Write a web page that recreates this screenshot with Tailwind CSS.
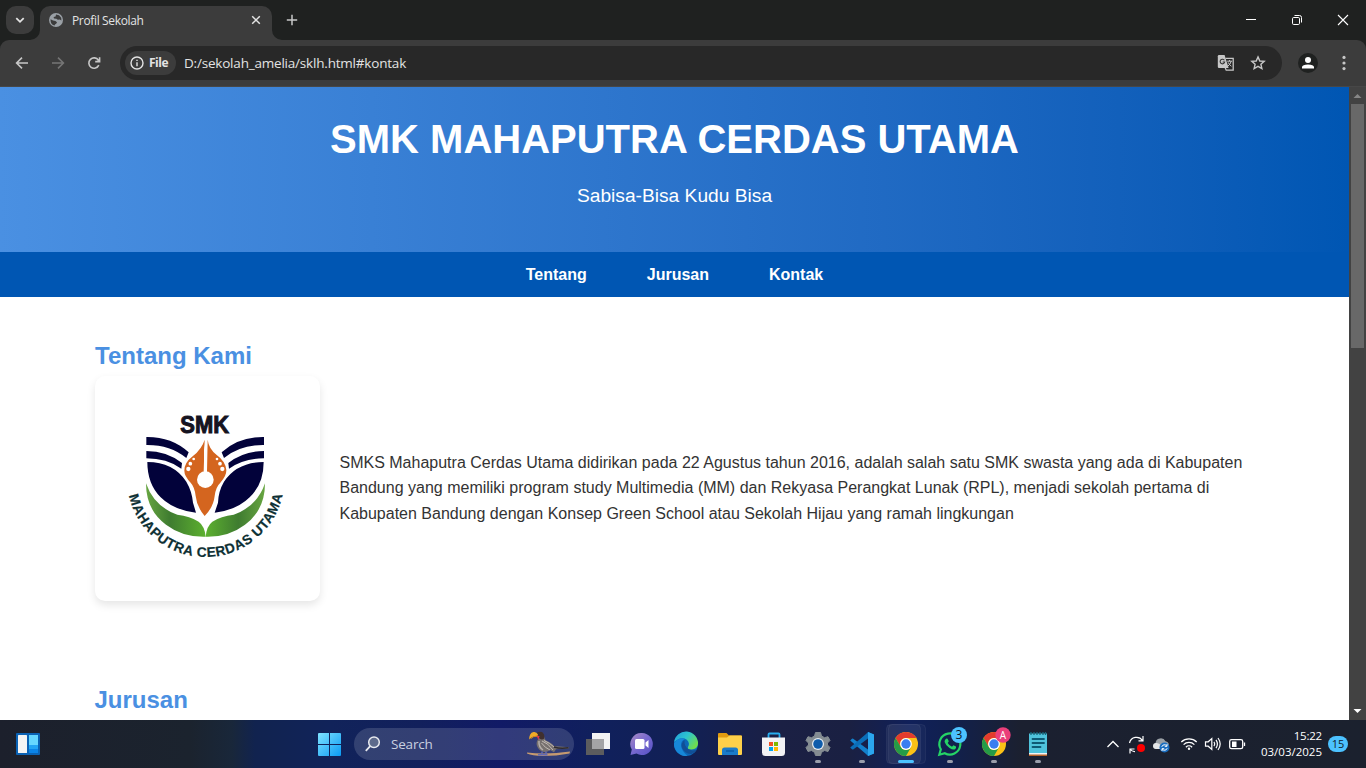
<!DOCTYPE html>
<html lang="id">
<head>
<meta charset="utf-8">
<title>Profil Sekolah</title>
<script src="https://cdn.jsdelivr.net/npm/@tailwindcss/browser@4"></script>
</head>
<body class="w-[1366px] h-[768px] overflow-hidden flex flex-col bg-white">

<!-- Tab strip -->
<div class="h-10 shrink-0 bg-[#1f2120] flex items-start font-['Open_Sans',sans-serif]">
  <div class="ml-1.5 mt-1.5 size-7 rounded-[10px] bg-[#3c3c3c] flex items-center justify-center">
    <svg class="size-3" viewBox="0 0 12 12" fill="none" stroke="#e3e3e3" stroke-width="1.8"><path d="M2.3 4.2 6 7.8 9.7 4.2"/></svg>
  </div>
  <div class="relative ml-1.5 mt-1.5 w-[232px] h-[34px] rounded-t-[10px] bg-[#3c3c3c] flex items-center pb-1.5 pl-[9px] pr-[11px]">
    <svg class="absolute -left-2.5 bottom-0 size-2.5" viewBox="0 0 10 10"><path d="M10 0V10H0A10 10 0 0 0 10 0Z" fill="#3c3c3c"/></svg>
    <svg class="absolute -right-2.5 bottom-0 size-2.5" viewBox="0 0 10 10"><path d="M0 0V10H10A10 10 0 0 1 0 0Z" fill="#3c3c3c"/></svg>
    <svg class="size-3.5" viewBox="0 0 14 14"><circle cx="7" cy="7" r="7" fill="#9aa0a6"/><path d="M1.6 6.2 4 7.6 6.4 8 8 9.2 7.4 10.6 6 11.4 5.6 12.6A5.8 5.8 0 0 1 1.6 6.2ZM7 1.5 10 2.2 12.2 4.8 12.4 7.4 10.8 6.6 8.8 6.8 7.4 5.8 5 5.4 4.6 4 6.6 3.4Z" fill="#3c3c3c"/></svg>
    <span class="ml-[9px] pt-0.5 text-[12px] tracking-[-0.35px] text-[#e3e3e3] leading-4 grow">Profil Sekolah</span>
    <svg class="size-2.5" viewBox="0 0 10 10" stroke="#e3e3e3" stroke-width="1.5"><path d="M1.2 1.2 8.8 8.8M8.8 1.2 1.2 8.8"/></svg>
  </div>
  <svg class="ml-[14px] mt-[14px] size-3" viewBox="0 0 12 12" stroke="#c7c7c7" stroke-width="1.5"><path d="M6 .8V11.2M.8 6H11.2"/></svg>
  <div class="ml-auto h-10 flex items-center">
    <svg class="w-[46px] h-10" viewBox="0 0 46 40"><path d="M18 19.5H28" stroke="#fff"/></svg>
    <svg class="w-[46px] h-10" viewBox="0 0 46 40" fill="none" stroke="#fff"><rect x="18.5" y="17.5" width="7" height="7" rx="1.2"/><path d="M20.5 15.5H25.5A2 2 0 0 1 27.5 17.5V22.5"/></svg>
    <svg class="w-[46px] h-10" viewBox="0 0 46 40"><path d="M18 15 28 25M28 15 18 25" stroke="#fff" stroke-width="1.1"/></svg>
  </div>
</div>

<!-- Toolbar -->
<div class="h-[47px] shrink-0 bg-[#1f2120]">
 <div class="h-full bg-[#3c3c3c] rounded-t-[9px] border-b border-[#474747] flex items-center font-['Open_Sans',sans-serif]">
  <svg class="ml-[15px] size-[14px]" viewBox="0 0 14 14" fill="none" stroke="#c7c7c7" stroke-width="1.6"><path d="M13 7H2M7 1.6 1.6 7 7 12.4"/></svg>
  <svg class="ml-[22px] size-[14px]" viewBox="0 0 14 14" fill="none" stroke="#757575" stroke-width="1.6"><path d="M1 7H12M7 1.6 12.4 7 7 12.4"/></svg>
  <svg class="ml-[22px] size-[14px]" viewBox="0 0 14 14" fill="none" stroke="#c7c7c7" stroke-width="1.6"><path d="M11.8 9.2A5.2 5.2 0 1 1 11.4 4.2L12.4 5.4M12.6 1.2V5.6H8.2"/></svg>
  <div class="ml-[19px] w-[1162px] h-[34px] rounded-full bg-[#282828] flex items-center pl-[5px]">
    <div class="w-[51px] h-6 rounded-full bg-[#3c3c3c] flex items-center pl-[5px]">
      <svg class="size-[14px]" viewBox="0 0 14 14" fill="none" stroke="#e3e3e3" stroke-width="1.4"><circle cx="7" cy="7" r="6"/><path d="M7 6.2V10.2M7 3.7V5.1"/></svg>
      <span class="ml-[5px] text-[12px] font-bold tracking-[-0.5px] text-[#e3e3e3] leading-4">File</span>
    </div>
    <span class="ml-2 text-[13.5px] tracking-[-0.2px] text-[#e3e3e3] leading-5 grow">D:/sekolah_amelia/sklh.html#kontak</span>
    <svg class="size-[18px]" viewBox="0 0 18 18"><path d="M2 1H7.6L11.6 14H2A1.2 1.2 0 0 1 .8 12.8V2.2A1.2 1.2 0 0 1 2 1Z" fill="#c7c7c7"/><path d="M8.6 4.4H16.2V16.2H9.2L8.2 13.8" fill="none" stroke="#c7c7c7" stroke-width="1.3"/><path d="M7.4 6.3A2.3 2.3 0 1 0 7.7 8H5.6" fill="none" stroke="#333" stroke-width="1.1"/><path d="M10.2 7.2H15M12.6 6V7.2M14.2 7.2Q13.4 10.4 10.8 12.2M11.2 8.4Q12.2 10.8 14.4 12.2" fill="none" stroke="#c7c7c7"/></svg>
    <svg class="ml-[15px] mr-4 size-4" viewBox="0 0 16 16" fill="none" stroke="#c7c7c7" stroke-width="1.4"><path d="M8 1.9 9.8 6 14.2 6.4 10.9 9.3 11.9 13.6 8 11.3 4.1 13.6 5.1 9.3 1.8 6.4 6.2 6Z"/></svg>
  </div>
  <svg class="ml-4 size-5" viewBox="0 0 20 20"><circle cx="10" cy="10" r="10" fill="#1f2120"/><circle cx="10" cy="7" r="3" fill="#fff"/><path d="M4 15.6V14Q4.4 11.4 10 11.4T16 14V15.6Z" fill="#fff"/></svg>
  <svg class="ml-6 w-1 h-4" viewBox="0 0 4 16" fill="#c7c7c7"><circle cx="2" cy="2.4" r="1.6"/><circle cx="2" cy="8" r="1.6"/><circle cx="2" cy="13.6" r="1.6"/></svg>
 </div>
</div>

<!-- Page viewport -->
<div class="h-[633px] shrink-0 flex">
  <div class="w-[1349px] h-full overflow-hidden bg-white font-['Liberation_Sans',Arial,sans-serif] text-[#333]">
    <header class="h-[165px] bg-linear-to-r from-[#4a90e2] to-[#0056b3] text-white text-center pt-[20px]">
      <h1 class="text-[40px] leading-[64px] font-bold">SMK MAHAPUTRA CERDAS UTAMA</h1>
      <p class="mt-[9px] text-[19.2px] leading-[31px]">Sabisa-Bisa Kudu Bisa</p>
    </header>
    <nav class="h-[45px] bg-[#0056b3] text-white font-bold text-base flex justify-center items-center gap-[60px]">
      <a>Tentang</a><a>Jurusan</a><a>Kontak</a>
    </nav>
    <main class="pl-[94.5px]">
      <section class="pt-[40px] h-[344px]">
        <h2 class="text-[24px] leading-[38px] font-bold text-[#4a90e2] pl-[0.5px]">Tentang Kami</h2>
        <div class="mt-[1px] flex items-center gap-5">
          <div class="size-[225px] rounded-[10px] bg-white shadow-[0_4px_8px_rgba(0,0,0,0.1)]">
            <svg class="size-[225px]" viewBox="15 18 675 675">
              <defs>
                <linearGradient id="leafL"><stop offset="0" stop-color="#67a541"/><stop offset=".4" stop-color="#3f7c30"/><stop offset="1" stop-color="#5cb02f"/></linearGradient>
                <linearGradient id="leafR"><stop offset="0" stop-color="#5cb02f"/><stop offset=".55" stop-color="#3f7c30"/><stop offset="1" stop-color="#67a541"/></linearGradient>
                <path id="arc" d="M111 325A236 236 0 0 0 583 325"/>
              </defs>
              <text x="271" y="189" textLength="146" lengthAdjust="spacingAndGlyphs" font-family="Liberation Sans" font-weight="700" font-size="69" fill="#15131f" stroke="#15131f" stroke-width="3">SMK</text>
              <g fill="#02023a">
                <path d="M169 201Q245 200 296 247L289 264Q240 224 169 225Z"/>
                <path d="M169 243Q230 243 276 279L274 296Q230 265 169 265Z"/>
                <path d="M172 276Q250 276 289 335Q306 364 309 398L318 428Q250 420 212 382Q172 342 172 276Z"/>
                <path d="M522 201Q446 200 395 247L402 264Q451 224 522 225Z"/>
                <path d="M522 243Q461 243 415 279L417 296Q461 265 522 265Z"/>
                <path d="M521 276Q441 276 402 335Q385 364 384 398L374 428Q441 420 479 382Q521 342 521 276Z"/>
              </g>
              <path d="M168 340Q192 410 262 434Q300 438 326 455Q344 468 347 500Q278 502 228 464Q168 420 168 340Z" fill="url(#leafL)"/>
              <path d="M525 340Q501 410 431 434Q393 438 367 455Q350 468 347 500Q415 502 465 464Q525 420 525 340Z" fill="url(#leafR)"/>
              <path d="M344 209Q336 236 308 259Q283 278 283 302Q283 318 302 338Q314 351 317 378Q320 410 344 438Q370 412 374 378Q377 351 391 338Q410 318 409 300Q406 274 381 256Q356 236 353 209L351 305H341Z" fill="#d4651f"/>
              <path d="M342 240V320H351V240L348 205Z" fill="#fff"/>
              <circle cx="346" cy="329" r="25" fill="#fff"/>
              <g fill="#fff"><circle cx="311" cy="267" r="4"/><circle cx="301" cy="281" r="5.500"/><circle cx="295" cy="297" r="6.500"/><circle cx="381" cy="267" r="4"/><circle cx="390" cy="281" r="5.500"/><circle cx="397" cy="297" r="6.500"/></g>
              <text font-family="Liberation Sans" font-weight="700" font-size="41" fill="#0e3034" stroke="#0e3034" stroke-width=".6"><textPath href="#arc" startOffset="52" textLength="639">MAHAPUTRA CERDAS UTAMA</textPath></text>
            </svg>
          </div>
          <p class="w-[914px] text-base leading-[25.6px] -mt-[0.6px] text-[#333]">SMKS Mahaputra Cerdas Utama didirikan pada 22 Agustus tahun 2016, adalah salah satu SMK swasta yang ada di Kabupaten Bandung yang memiliki program study Multimedia (MM) dan Rekyasa Perangkat Lunak (RPL), menjadi sekolah pertama di Kabupaten Bandung dengan Konsep Green School atau Sekolah Hijau yang ramah lingkungan</p>
        </div>
      </section>
      <h2 class="mt-[40px] text-[24px] leading-[38px] font-bold text-[#4a90e2]">Jurusan</h2>
    </main>
  </div>
  <div class="w-[17px] h-full bg-[#424242] flex flex-col items-center">
    <svg class="w-[17px] h-[17px]" viewBox="0 0 17 17"><path d="M4.500 11 8.500 7 12.500 11Z" fill="#868686"/></svg>
    <div class="w-[13px] h-[244px] bg-[#686868]"></div>
    <svg class="mt-auto w-[17px] h-[17px]" viewBox="0 0 17 17"><path d="M4.500 6 8.500 10 12.500 6Z" fill="#fff"/></svg>
  </div>
</div>

<!-- Taskbar -->
<div class="h-12 shrink-0 flex items-center font-['Open_Sans',sans-serif] text-white bg-[linear-gradient(90deg,#1c202c_0px,#1b232e_190px,#19273a_232px,#11234f_255px,#11235a_330px,#12205c_420px,#111a66_500px,#10205c_600px,#122054_690px,#1b2044_780px,#1a2042_850px,#10205a_910px,#11204e_950px,#1b2030_1020px,#1b212e_1366px)]">
  <svg class="ml-4 w-6 h-[22px]" viewBox="0 0 24 22"><rect width="24" height="22" rx="1" fill="#0a62b4"/><rect x="2" y="2" width="9" height="18" rx=".6" fill="#f4f4f4"/><rect x="13" y="2" width="9" height="10" fill="#66d7ff"/><rect x="13" y="12" width="9" height="4" fill="#22a4f4"/><rect x="13" y="16" width="9" height="4" fill="#0a84e8"/></svg>
  <svg class="ml-[278px] size-[23px]" viewBox="0 0 23 23"><defs><linearGradient id="win" x1="0" y1="0" x2="23" y2="23" gradientUnits="userSpaceOnUse"><stop stop-color="#7fe3ff"/><stop offset="1" stop-color="#0a9bf5"/></linearGradient></defs><path d="M0 1Q0 0 1 0H11V11H0ZM12 0H22Q23 0 23 1V11H12ZM0 12H11V23H1Q0 23 0 22ZM12 12H23V22Q23 23 22 23H12Z" fill="url(#win)"/></svg>
  <div class="ml-[13px] w-[220px] h-8 rounded-full bg-white/14 flex items-center pl-[11px]">
    <svg class="size-4" viewBox="0 0 16 16" fill="none" stroke="#e8eaf0" stroke-width="1.5"><circle cx="9" cy="6.300" r="5.300" fill="#5d6a8c"/><path d="M5.200 10.200 .8 14.800" stroke-width="1.800"/></svg>
    <span class="ml-[10px] text-[13.500px] tracking-[-0.200px] leading-5 text-[#c9d0e0] grow">Search</span>
    <svg class="mr-[3px] w-[45px] h-7" viewBox="0 0 45 28"><path d="M1 22.500Q20 25 44 21.500L43.500 23.500Q30 26 17 26Q6 25.500 1 23.500Z" fill="#c59a70"/><path d="M12 7Q15 6 18 6Q18.500 9 20 10.500Q26 13 28 16L43 17.200 42.500 18.500 30 19.200 28 22.300 24 20Q21 22.800 17 21.800Q12 20 10.700 15Q10 11 13 8.500Z" fill="#77716f"/><path d="M13 11Q12.500 17 17 20" stroke="#b5afab" stroke-width="1.500" fill="none"/><path d="M16 11Q22 13 27 20M18 10.500Q24 13 28 17M15.500 13Q19 18 24 20" stroke="#d4cdc6" fill="none" stroke-width=".8"/><path d="M10 3.500Q12 1 16 2Q19 4 18.200 8.500Q16 10.500 13.500 8.500L11.500 5Z" fill="#40302e"/><path d="M3.300 9.500Q3 3 7.500 2Q10.500 1.500 12 4.500L11 6.500Q6.500 5.500 3.300 9.500Z" fill="#f0ab28"/><path d="M5 8.500Q7 6 11.500 6" stroke="#d88715" fill="none"/><path d="M10.500 5.800 13.500 6 12.500 10Z" fill="#e0364e"/><path d="M28 17Q34 19 42.500 17.800" fill="none" stroke="#2e2b31" stroke-width="1.600"/><path d="M16 21.500V24M20 21.500V24M12 24.700H21.500" stroke="#646bb2" stroke-width="1.500"/></svg>
  </div>
  <div class="ml-[2px] flex">
    <svg class="w-11 h-12" viewBox="0 0 44 48"><rect x="16" y="13" width="18" height="16" fill="#f3f3f3"/><rect x="10" y="19" width="18" height="16" fill="#5c5c5e"/><rect x="16" y="19" width="12" height="10" fill="#a4a4a6"/></svg>
    <svg class="w-11 h-12" viewBox="0 0 44 48"><defs><linearGradient id="chat" x1="0" y1="0" x2="1" y2="1"><stop stop-color="#a98bc4"/><stop offset=".5" stop-color="#7668cf"/><stop offset="1" stop-color="#5450c4"/></linearGradient></defs><path d="M22 13A11 11 0 1 1 16.500 33.600L10.500 35 11.800 29.500A11 11 0 0 1 22 13Z" fill="url(#chat)"/><rect x="15" y="19" width="9.500" height="10" rx="1.500" fill="#fff"/><path d="M25.500 22.500 28.500 20V28L25.500 25.500Z" fill="#fff"/></svg>
    <svg class="w-11 h-12" viewBox="0 0 44 48"><defs><linearGradient id="eg" x1="0" y1="0" x2="1" y2=".6"><stop stop-color="#229bdc"/><stop offset=".5" stop-color="#2cc4cf"/><stop offset="1" stop-color="#6fdc4e"/></linearGradient></defs><circle cx="22" cy="24" r="12" fill="#0c67b8"/><path d="M10.100 22A12 12 0 0 1 34 24Q33.500 29 27.500 29.500Q23 29.500 24 27Q26.500 23 22.500 19.500Q17 16 10.100 22Z" fill="url(#eg)"/><path d="M10 23Q15 16.500 21 19Q17 20.500 17 25Q17.500 31 23.500 35.900A12 12 0 0 1 10 23Z" fill="#1787d8"/><path d="M20.500 20Q16.500 23 18 28Q21 34 27.500 34Q31 33.200 33 29.500Q28 31.500 24 29Q20 26 20.500 20Z" fill="#114f96"/></svg>
    <svg class="w-11 h-12" viewBox="0 0 44 48"><path d="M10 14Q10 13 11 13H18.500L21 15.500H33Q34 15.500 34 16.500V20H10Z" fill="#e19b10"/><path d="M10 17.500H19L21.500 15.500H33Q34 15.500 34 16.500V34Q34 35 33 35H11Q10 35 10 34Z" fill="#fdd04a"/><path d="M14 35V30Q14 27.500 16.500 27.500H27.500Q30 27.500 30 30V35Z" fill="#1a7bc9"/><path d="M18 31H26" stroke="#0d5da6" stroke-width="1.500"/></svg>
    <svg class="w-11 h-12" viewBox="0 0 44 48"><path d="M16.500 18.500V14.500Q16.500 13.500 17.500 13.500H26.500Q27.500 13.500 27.500 14.500V18.500" fill="none" stroke="#28aef0" stroke-width="1.800"/><path d="M10 17.500H33V32.500Q33 36 29.500 36H13.500Q10 36 10 32.500Z" fill="#f2f2f4"/><rect x="17" y="22" width="4" height="4" fill="#f25022"/><rect x="22" y="22" width="4" height="4" fill="#7fba00"/><rect x="17" y="27" width="4" height="4" fill="#00a4ef"/><rect x="22" y="27" width="4" height="4" fill="#ffb900"/></svg>
    <svg class="w-11 h-12" viewBox="0 0 44 48"><path d="M19.500 12.500H24.500L25.500 16 28.500 17.700 32 16.700 34 20.500 31.500 23V25L34 27.500 32 31.500 28.500 30.500 25.500 32.300 24.500 35.500H19.500L18.500 32.300 15.500 30.500 12 31.500 10 27.500 12.500 25V23L10 20.500 12 16.700 15.500 17.700 18.500 16Z" fill="#848c92" stroke="#848c92" stroke-linejoin="round"/><circle cx="22" cy="24" r="6" fill="#e9eef2"/><circle cx="22" cy="24" r="4.800" fill="#0e5cab"/><rect x="19" y="40" width="6" height="3" rx="1.500" fill="#9a9eab"/></svg>
    <svg class="w-11 h-12" viewBox="0 0 44 48"><path d="M28 12 34 14.500V33.500L28 36 26 34 10.200 20.500 12 18.800Q12.800 18.200 13.600 18.900L28 29.500Z" fill="#1380cc"/><path d="M10.200 27.500 26 14 28 12V18.500L13.500 29.300Q12.800 29.900 12 29.200Z" fill="#0b6eb8"/><path d="M28 12 34 14.500V33.500L28 36Z" fill="#2ba6ee"/><rect x="19" y="40" width="6" height="3" rx="1.500" fill="#9a9eab"/></svg>
    <svg class="w-11 h-12" viewBox="0 0 44 48"><rect x="4.500" y="4.500" width="37" height="39" rx="4" fill="#fff" fill-opacity=".03" stroke="#fff" stroke-opacity=".06"/><rect x="2.500" y="4.500" width="34" height="39" rx="4" fill="#fff" fill-opacity=".06" stroke="#fff" stroke-opacity=".06"/>
      <g id="chrome"><circle cx="22" cy="24" r="12" fill="#fbc116"/><path d="M11.600 18A12 12 0 0 1 32.400 18H22A6 6 0 0 0 16.800 27Z" fill="#e33b2e"/><path d="M11.600 18 16.800 27A6 6 0 0 0 27.200 27L22 36A12 12 0 0 1 11.600 18Z" fill="#259b47"/><circle cx="22" cy="24" r="5.900" fill="#fff"/><circle cx="22" cy="24" r="4.700" fill="#3a7df0"/></g>
      <rect x="14" y="40" width="16" height="3" rx="1.500" fill="#4cc2ff"/></svg>
    <svg class="w-11 h-12" viewBox="0 0 44 48"><path d="M11.300 34.700 12.800 29.300A10.500 10.500 0 1 1 16.800 33.200Z" fill="none" stroke="#25d366" stroke-width="2.200"/><path d="M17.500 19.200Q18.500 18 19.600 18.800L20.800 21.300 19.700 23Q21.200 25.700 24 26.800L25.400 25.300 28 26.500Q28.500 28 27 29.200Q25 30.300 21.500 28Q17.500 25.300 16.600 22Q16.500 20.300 17.500 19.200Z" fill="#25d366"/><circle cx="31" cy="15" r="8" fill="#4cc2ff"/><text x="31" y="19.300" font-size="12" text-anchor="middle" font-family="Open Sans" fill="#10151f">3</text><rect x="19" y="40" width="6" height="3" rx="1.500" fill="#9a9eab"/></svg>
    <svg class="w-11 h-12" viewBox="0 0 44 48"><use href="#chrome"/><circle cx="31" cy="15" r="7.700" fill="#ea3f7a"/><text x="31" y="18.600" font-size="10" text-anchor="middle" font-family="Open Sans" fill="#fff">A</text><rect x="19" y="40" width="6" height="3" rx="1.500" fill="#9a9eab"/></svg>
    <svg class="w-11 h-12" viewBox="0 0 44 48"><path d="M13 33H31V36H13Z" fill="#f3f3f3"/><path d="M13 34.500H31V36H13Z" fill="#b5632a"/><rect x="13" y="13.500" width="18" height="19.500" fill="#4fc3dc"/><path d="M15 12V15M18 12V15M21 12V15M24 12V15M27 12V15M29.500 12V15" stroke="#15687e" stroke-width="1.300"/><path d="M16.500 19H28M16.500 23H28M16.500 27H24.500" stroke="#0e5a75" stroke-width="1.800" stroke-linecap="round"/><rect x="19" y="40" width="6" height="3" rx="1.500" fill="#9a9eab"/></svg>
  </div>
  <div class="ml-auto flex items-center">
    <svg class="w-6 h-12" viewBox="0 0 24 48"><path d="M6.500 27 12 21.500 17.500 27" fill="none" stroke="#fff" stroke-width="1.300"/></svg>
    <svg class="w-6 h-12" viewBox="0 0 24 48" fill="none" stroke="#fff" stroke-width="1.200"><path d="M4.500 23A7.200 7.200 0 0 1 17.500 20.500M18 16V20.800H13.500M9.500 29H5V33.500M5 29Q7 31.800 10 31.500"/><circle cx="16" cy="28" r="4" fill="#fe0000" stroke="none"/></svg>
    <svg class="w-6 h-12" viewBox="0 0 24 48"><path d="M7 29A3 3 0 0 1 6.500 23.200A5.300 5.300 0 0 1 16.500 21.200A4 4 0 0 1 17 29Z" fill="#9aa0a6"/><path d="M7 29A3 3 0 0 1 7 23Q10 22.500 12 25.500L13 29Z" fill="#e4e6e8"/><circle cx="15.500" cy="27.500" r="5" fill="#1b6ec0"/><path d="M12.800 26.800A2.800 2.800 0 0 1 17.800 26M18.200 28.200A2.800 2.800 0 0 1 13.200 29M18 24V26.300H15.800M13 31V28.700H15.200" fill="none" stroke="#fff"/></svg>
    <svg class="ml-1 w-6 h-12" viewBox="0 0 24 48" fill="none" stroke="#fff" stroke-width="1.300"><path d="M4.300 22A11 11 0 0 1 19.700 22M6.600 24.600A7.600 7.600 0 0 1 17.400 24.600M8.900 27.200A4.400 4.400 0 0 1 15.100 27.200"/><circle cx="12" cy="28.800" r="1.200" fill="#fff" stroke="none"/></svg>
    <svg class="w-6 h-12" viewBox="0 0 24 48" fill="none" stroke="#fff" stroke-width="1.200"><path d="M4.500 21.800H7.200L10.800 18.500V29.500L7.200 26.200H4.500ZM13 21.800Q14.500 24 13 26.200M15 19.800Q17.800 24 15 28.200M17 18Q21.400 24 17 30"/></svg>
    <svg class="w-6 h-12" viewBox="0 0 24 48"><rect x="4.700" y="19.700" width="13" height="9" rx="1.800" fill="none" stroke="#fff" stroke-width="1.300"/><rect x="7" y="21.500" width="4.500" height="5.500" fill="#fff"/><path d="M19.500 22.500V26" stroke="#fff" stroke-width="1.300"/></svg>
    <div class="w-[73px] text-right text-[11.500px] leading-4"><div class="tracking-[-0.2px]">15:22</div><div>03/03/2025</div></div>
    <div class="ml-1.5 mr-[18px] w-5 h-4 rounded-full bg-[#4cc2ff] text-[#10202e] text-[11px] leading-4 text-center">15</div>
  </div>
</div>
</body>
</html>
